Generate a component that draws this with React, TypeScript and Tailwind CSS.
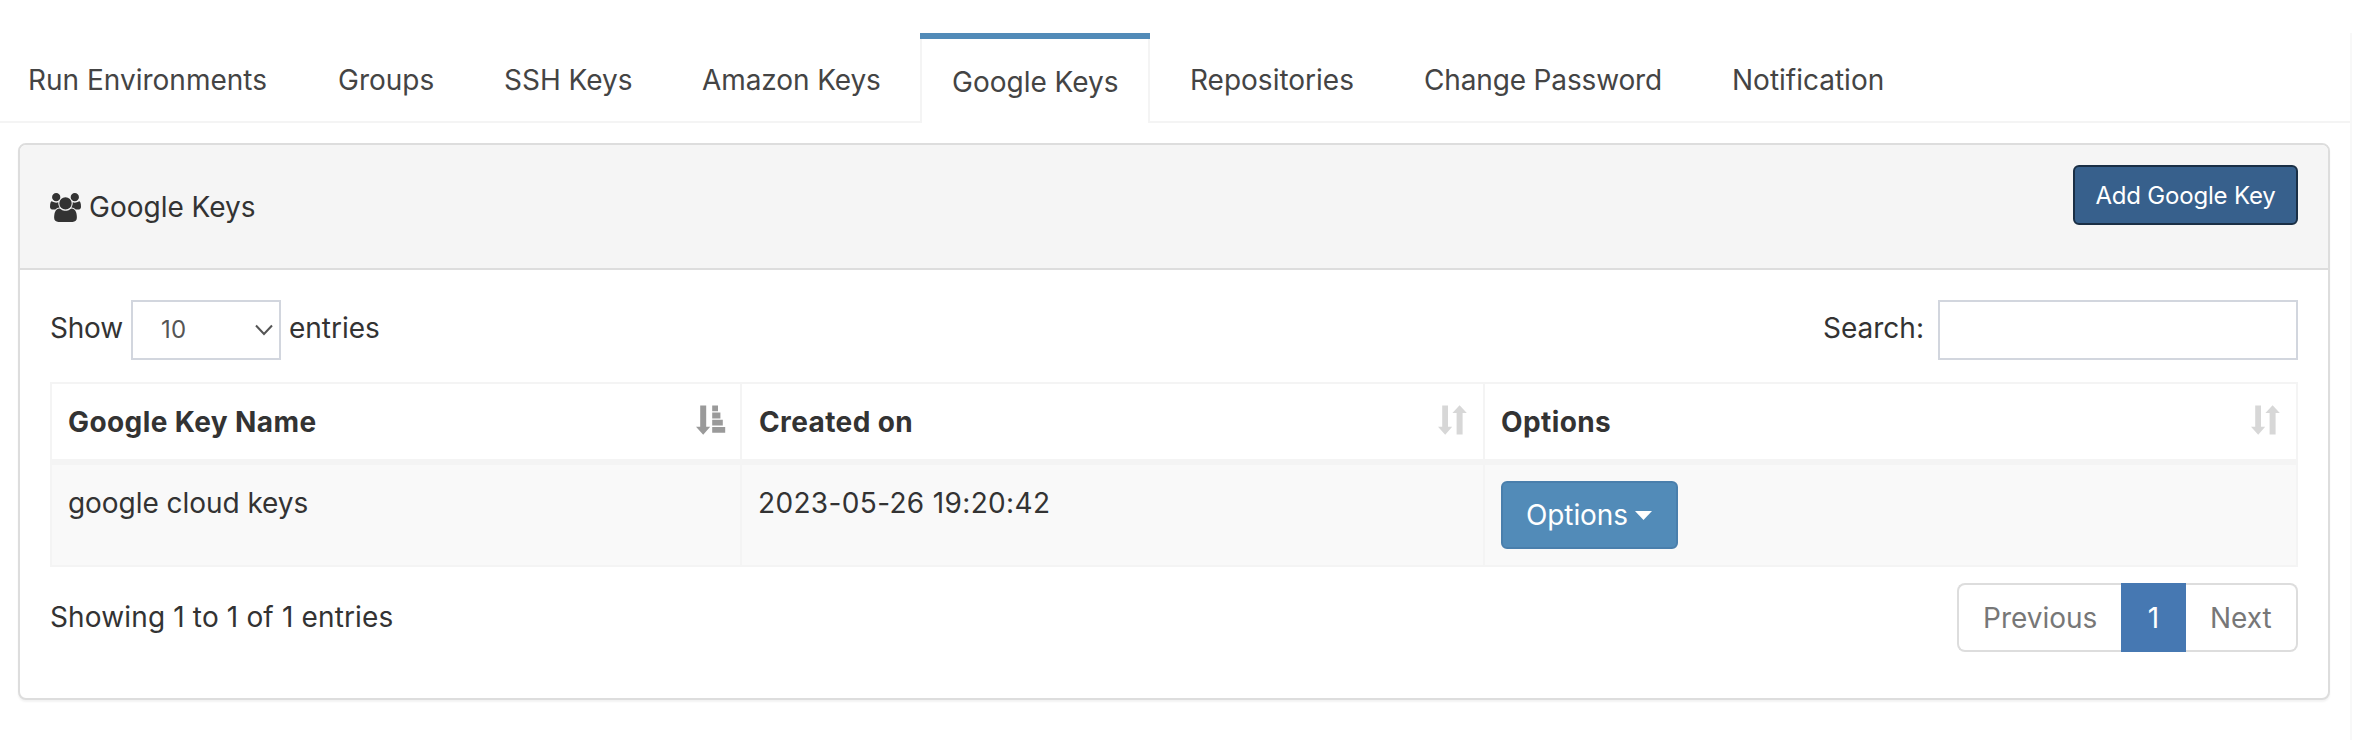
import React from "react";

const tabs = [
  { label: "Run Environments", width: "w-[310px]" },
  { label: "Groups", width: "w-[166px]" },
  { label: "SSH Keys", width: "w-[198px]" },
  { label: "Amazon Keys", width: "w-[218px] tracking-[-0.1px]" },
  { label: "Google Keys", width: "w-[230px]", active: true },
  { label: "Repositories", width: "w-[234px]" },
  { label: "Change Password", width: "w-[308px] tracking-[-0.15px]" },
  { label: "Notification", width: "w-[190px]" },
];

function UsersIcon() {
  return (
    <svg className="h-[29px] w-[31px]" viewBox="0 0 1920 1792" fill="currentColor">
      <g transform="translate(0 1536) scale(1 -1)">
        <path d="M593 640q-162 -5 -265 -128h-134q-82 0 -138 40.5t-56 118.5q0 353 124 353q6 0 43.5 -21t97.5 -42.5t119 -21.5q67 0 133 23q-5 -37 -5 -66q0 -139 81 -256zM1664 3q0 -120 -73 -189.5t-194 -69.5h-874q-121 0 -194 69.5t-73 189.5q0 53 3.5 103.5t14 109t26.5 108.5t43 97.5t62 81t85.5 53.5t111.5 20q10 0 43 -21.5t73 -48t107 -48t135 -21.5t135 21.5t107 48t73 48t43 21.5q61 0 111.5 -20t85.5 -53.5t62 -81t43 -97.5t26.5 -108.5t14 -109t3.5 -103.5zM640 1280q0 -106 -75 -181t-181 -75t-181 75t-75 181t75 181t181 75t181 -75t75 -181zM1344 896q0 -159 -112.5 -271.5t-271.5 -112.5t-271.5 112.5t-112.5 271.5t112.5 271.5t271.5 112.5t271.5 -112.5t112.5 -271.5zM1920 671q0 -78 -56 -118.5t-138 -40.5h-134q-103 123 -265 128q81 117 81 256q0 29 -5 66q66 -23 133 -23q59 0 119 21.5t97.5 42.5t43.5 21q124 0 124 -353zM1792 1280q0 -106 -75 -181t-181 -75t-181 75t-75 181t75 181t181 75t181 -75t75 -181z" />
      </g>
    </svg>
  );
}

function SortAscIcon() {
  return (
    <svg className="h-[30px] w-[30px] shrink-0" viewBox="0 0 30 30" fill="#9a9a9a">
      <path d="M4.2 0.5h6v21.3h4L7.2 29.8L0 21.8h4.2zM16.2 0.5h5.8v5.8h-5.8zM16.2 7.6h8.2v5.8h-8.2zM16.2 14.8h10.6v5.8h-10.6zM16.2 21.9h13v5.9h-13z" />
    </svg>
  );
}

function SortIcon() {
  return (
    <svg className="h-[30px] w-[30px] shrink-0" viewBox="0 0 30 30" fill="#d7d7d7">
      <path d="M4.2 0.5h5.8v21.3h4.2L7.2 29.8L0 21.8h4.2zM21.6 0.2l7.2 7.8h-4.2v21.6h-6V8h-4.2z" />
    </svg>
  );
}

export default function App() {
  return (
    <div className="h-[740px] w-[2356px] overflow-hidden bg-white pt-[33px] font-['Inter',sans-serif] text-[28px] leading-[40px] text-[#333]">
      <div className="h-[707px] w-[2352px] border-r-2 border-[#f8f8f8]">
        <nav className="flex h-[90px] border-b-2 border-[#f4f4f4] text-[#444]">
          <span className="w-7 shrink-0" />
          {tabs.map((t) =>
            t.active ? (
              <div
                key={t.label}
                className={`${t.width} mr-[40px] h-[90px] shrink-0 border-x-2 border-x-[#f4f4f4] bg-white`}
              >
                <div className="-mx-0.5 h-1.5 bg-[#528bb8]" />
                <div className="pt-[23px] pl-[30px] whitespace-nowrap">{t.label}</div>
              </div>
            ) : (
              <div key={t.label} className={`${t.width} shrink-0 pt-[27px] whitespace-nowrap`}>
                {t.label}
              </div>
            )
          )}
        </nav>

        <section className="mt-5 ml-[18px] h-[557px] w-[2312px] rounded-lg border-2 border-[#ddd] bg-white shadow-[0_2px_2px_rgba(0,0,0,0.05)]">
          <header className="flex h-[125px] justify-between rounded-t-md border-b-2 border-[#ddd] bg-[#f5f5f5] px-[30px]">
            <h1 className="flex items-center gap-2 self-start pt-[42px]">
              <UsersIcon />
              Google Keys
            </h1>
            <button className="mt-5 h-[60px] w-[225px] rounded-md border-2 border-[#1a2f45] bg-[#37608c] pt-0.5 text-[24px] leading-9 tracking-[-0.2px] text-white">
              Add Google Key
            </button>
          </header>

          <div className="px-[30px] pt-[30px]">
            <div className="flex h-[60px] items-start justify-between">
              <div className="flex items-start">
                <span className="w-[81px] pt-2 tracking-[-0.2px]">Show</span>
                <div className="flex h-[60px] w-[150px] items-center justify-between border-2 border-[#d2d6de] pr-1.5 pl-[28px] text-[24px] tracking-[0.3px] text-[#555]">
                  10
                  <svg className="h-3 w-[18px]" viewBox="0 0 18 12" fill="none" stroke="#555" strokeWidth="2">
                    <path d="M1 1.5l8 8.5l8 -8.5" />
                  </svg>
                </div>
                <span className="pt-2 pl-2">entries</span>
              </div>
              <div className="flex items-start">
                <span className="w-[115px] pt-2">Search:</span>
                <input className="h-[60px] w-[360px] border-2 border-[#d2d6de] bg-white" />
              </div>
            </div>

            <div className="mt-[22px] border-2 border-[#f4f4f4]">
              <div className="grid h-[81px] grid-cols-[690px_743px_1fr] border-b-[6px] border-[#f4f4f4] font-bold tracking-[0.4px]">
                <div className="flex items-start justify-between border-r-2 border-[#f4f4f4] pr-[14px] pl-[16px]">
                  <span className="pt-[18px]">Google Key Name</span>
                  <span className="pt-[21px]"><SortAscIcon /></span>
                </div>
                <div className="flex items-start justify-between border-r-2 border-[#f4f4f4] pr-[15px] pl-[17px]">
                  <span className="pt-[18px]">Created on</span>
                  <span className="pt-[21px]"><SortIcon /></span>
                </div>
                <div className="flex items-start justify-between pr-[15px] pl-[16px]">
                  <span className="pt-[18px]">Options</span>
                  <span className="pt-[21px]"><SortIcon /></span>
                </div>
              </div>
              <div className="grid h-[100px] grid-cols-[690px_743px_1fr] bg-[#f9f9f9]">
                <div className="border-r-2 border-[#f4f4f4] pt-[18px] pl-[16px] tracking-[-0.05px]">google cloud keys</div>
                <div className="border-r-2 border-[#f4f4f4] pt-[18px] pl-[16px] tracking-[0.35px]">2023-05-26 19:20:42</div>
                <div className="pt-4 pl-4">
                  <button className="flex h-[68px] w-[177px] items-center rounded-md border-2 border-[#4a7fac] bg-[#528bb8] pl-[23px] text-white">
                    <span className="w-[109px] text-left tracking-[-0.1px]">Options</span>
                    <svg className="h-[9px] w-[17px]" viewBox="0 0 17 9" fill="currentColor">
                      <path d="M0 0h17L8.500 9z" />
                    </svg>
                  </button>
                </div>
              </div>
            </div>

            <div className="mt-4 flex h-[69px] items-start justify-between">
              <span className="pt-[14px] tracking-[0.15px]">Showing 1 to 1 of 1 entries</span>
              <div className="flex h-[69px] w-[341px] text-[#777]">
                <span className="w-[164px] rounded-l-lg border-2 border-r-0 border-[#ddd] pt-[13px] pl-[24px]">Previous</span>
                <span className="w-[65px] bg-[#4678b2] pt-[15px] text-center text-white">1</span>
                <span className="w-[112px] rounded-r-lg border-2 border-l-0 border-[#ddd] pt-[13px] pl-[24px]">Next</span>
              </div>
            </div>
          </div>
        </section>
      </div>
    </div>
  );
}
